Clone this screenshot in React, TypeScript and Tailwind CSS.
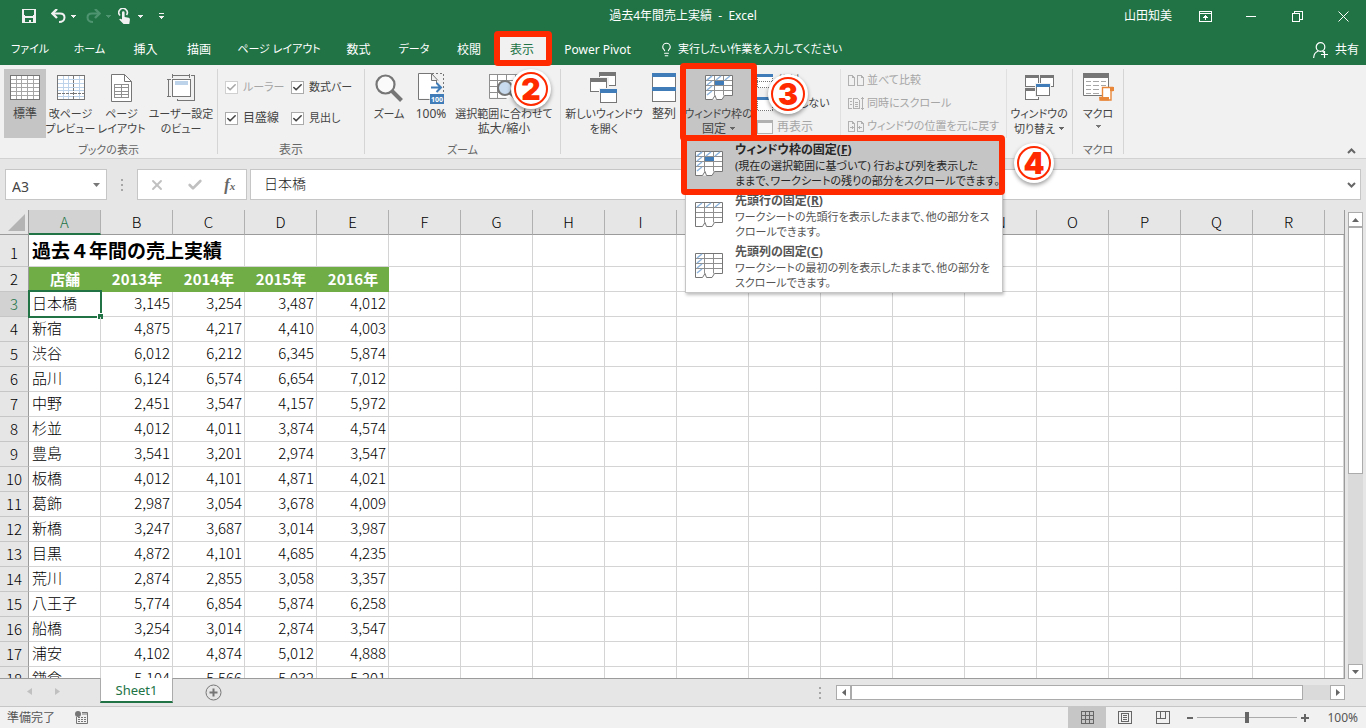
import React from "react";
import { Check, Lightbulb, X } from "lucide-react";

interface Tab {
  label: string;
  width: string;
}

const tabs: Tab[] = [
  { label: "ファイル", width: "w-[60px]" },
  { label: "ホーム", width: "w-[59px]" },
  { label: "挿入", width: "w-[53px]" },
  { label: "描画", width: "w-[54px]" },
  { label: "ページ レイアウト", width: "w-[106px]" },
  { label: "数式", width: "w-[53px]" },
  { label: "データ", width: "w-[58px]" },
  { label: "校閲", width: "w-[52px]" },
  { label: "表示", width: "w-[54px]" },
  { label: "Power Pivot", width: "w-[97px]" },
];

const columns = "ABCDEFGHIJKLMNOPQR".split("");

const years = ["2013年", "2014年", "2015年", "2016年"];

const sales: [string, string, string, string, string][] = [
  ["日本橋", "3,145", "3,254", "3,487", "4,012"],
  ["新宿", "4,875", "4,217", "4,410", "4,003"],
  ["渋谷", "6,012", "6,212", "6,345", "5,874"],
  ["品川", "6,124", "6,574", "6,654", "7,012"],
  ["中野", "2,451", "3,547", "4,157", "5,972"],
  ["杉並", "4,012", "4,011", "3,874", "4,574"],
  ["豊島", "3,541", "3,201", "2,974", "3,547"],
  ["板橋", "4,012", "4,101", "4,871", "4,021"],
  ["葛飾", "2,987", "3,054", "3,678", "4,009"],
  ["新橋", "3,247", "3,687", "3,014", "3,987"],
  ["目黒", "4,872", "4,101", "4,685", "4,235"],
  ["荒川", "2,874", "2,855", "3,058", "3,357"],
  ["八王子", "5,774", "6,854", "5,874", "6,258"],
  ["船橋", "3,254", "3,014", "2,874", "3,547"],
  ["浦安", "4,102", "4,874", "5,012", "4,888"],
  ["鎌倉", "5,104", "5,566", "5,032", "5,201"],
];

const freezeOptions: {
  kind: "both" | "row" | "col";
  title: string;
  hotkey: string;
  lines: [string, string];
}[] = [
  {
    kind: "both",
    title: "ウィンドウ枠の固定",
    hotkey: "F",
    lines: ["(現在の選択範囲に基づいて) 行および列を表示した", "ままで、ワークシートの残りの部分をスクロールできます。"],
  },
  {
    kind: "row",
    title: "先頭行の固定",
    hotkey: "R",
    lines: ["ワークシートの先頭行を表示したままで、他の部分をス", "クロールできます。"],
  },
  {
    kind: "col",
    title: "先頭列の固定",
    hotkey: "C",
    lines: ["ワークシートの最初の列を表示したままで、他の部分を", "スクロールできます。"],
  },
];

// Labels with kana are set one size smaller than pure kanji or latin ones
const textSize = (label: string) => (/[ぁ-ヶ]/.test(label) ? "text-[11px]" : "text-[12px]");

/* ---------- Icons ---------- */

const Caret = ({ className = "" }: { className?: string }) => (
  <svg width="5" height="3" viewBox="0 0 5 3" className={className} shapeRendering="crispEdges">
    <path d="M0 0h5v1H4v1H3v1H2V2H1V1H0z" fill="currentColor" />
  </svg>
);

const SaveIcon = () => (
  <svg width="14" height="14" viewBox="0 0 14 14" shapeRendering="crispEdges">
    <path d="M0 0h14v14H0z" fill="#f1f1f1" />
    <path d="M2 1h10v6H2zM3 9h8v4H9v-2H7v2H3z" fill="#217346" />
    <path d="M2 6h1v1H2zM11 6h1v1h-1z" fill="#f1f1f1" />
  </svg>
);

const UndoIcon = () => (
  <svg width="15" height="14" viewBox="0 0 15 14" fill="none">
    <path d="M2 4.500h7c3 0 4.500 1.600 4.500 4S11.500 13 8 13" stroke="currentColor" strokeWidth="2" />
    <path d="M6 0 1.500 4.500 6 9" stroke="currentColor" strokeWidth="2.400" />
  </svg>
);

const TouchIcon = () => (
  <svg width="13" height="17" viewBox="0 0 13 17">
    <path d="M2 7.500A4.200 4.200 0 1 1 8.500 7" stroke="#f1f1f1" strokeWidth="1.600" fill="none" />
    <path d="M4 4.500a1.300 1.300 0 0 1 2.600 0V9l4 .8c1 .3 1.400 1 1.300 2L11.300 16H5.500L1.200 11.500c.6-1 1.600-1 2.800 0z" fill="#f1f1f1" />
  </svg>
);

const NormalIcon = () => (
  <svg width="30" height="25" viewBox="0 0 30 25" shapeRendering="crispEdges">
    <rect x=".5" y=".5" width="29" height="24" fill="#fff" />
    <path d="M6.500 1v23M11.500 1v23M17.500 1v23M23.500 1v23M1 4.500h28M1 8.500h28M1 12.500h28M1 16.500h28M1 20.500h28" stroke="#a6a6a6" />
    <rect x=".5" y=".5" width="29" height="24" fill="none" stroke="#767676" />
  </svg>
);

const PageBreakIcon = () => (
  <svg width="28" height="25" viewBox="0 0 28 25" fill="none" shapeRendering="crispEdges">
    <rect x=".5" y=".5" width="27" height="24" fill="#fff" />
    <path d="M6.500 1v23M11.500 1v23M22.500 1v23M1 4.500h26M1 8.500h26M1 12.500h26M1 15.500h26M1 21.500h26" stroke="#bcd3ea" />
    <path d="M16.500 1v23M1 18.500h26" stroke="#767676" strokeDasharray="3 1" />
    <rect x=".5" y=".5" width="27" height="24" stroke="#767676" />
  </svg>
);

const PageLayoutIcon = () => (
  <svg width="21" height="28" viewBox="0 0 21 28" fill="none">
    <path d="M.5.5h13l7 7v20H.5z" fill="#fff" stroke="#767676" />
    <path d="M13.500.5v7h7" stroke="#767676" />
    <path d="M3.500 10.500h14v13h-14zM3.500 13.500h14M3.500 17.500h14M3.500 20.500h14M10.500 10v14" stroke="#8f8f8f" shapeRendering="crispEdges" />
  </svg>
);

const CustomViewIcon = () => (
  <svg width="28" height="28" viewBox="0 0 28 28" fill="none" shapeRendering="crispEdges">
    <path d="M5.500 0v4M22.500 0v4M5 1.500h18M0 5.500h4M1.500 5v18M0 22.500h4M24 1.500h3.500v25h-17v-2" stroke="#767676" />
    <rect x="5.500" y="5.500" width="18" height="17" fill="#fff" stroke="#767676" />
    <rect x="8" y="7" width="13" height="4" fill="#bcd3ea" />
  </svg>
);

const MagnifierIcon = () => (
  <svg width="28" height="29" viewBox="0 0 28 29" fill="none">
    <circle cx="10.500" cy="11.500" r="9" fill="#fafafa" stroke="#767676" strokeWidth="2.200" />
    <path d="m17 18 9.500 9.500" stroke="#767676" strokeWidth="4" />
  </svg>
);

const HundredIcon = () => (
  <svg width="28" height="32" viewBox="0 0 28 32" fill="none">
    <path d="M1.500 1.500h13v7h6v18h-19z" fill="#fff" />
    <path d="M20 8.500h-5.500v-7l6.500 7M14.500 1.500H1.500v26h11M19.500 9v3" stroke="#767676" />
    <path d="M15 1.500h11.500V20" stroke="#767676" strokeDasharray="2 2" />
    <path d="M14 15.500h9M19.500 11l4.500 4.500-4.500 4.500" stroke="#3f7cb8" strokeWidth="2" />
    <rect x="13" y="22" width="14" height="10" fill="#3f7cb8" />
    <text x="20" y="30" textAnchor="middle" fontSize="7" fontWeight="700" fill="#fff" fontFamily="Noto Sans">100</text>
  </svg>
);

const ZoomSelectionIcon = () => (
  <svg width="30" height="32" viewBox="0 0 30 32" fill="none">
    <path d="M1 2.500h28v23H1z" fill="#fff" />
    <path d="M.5 2.500h29M.5 8.500h29M.5 14.500h10M.5 20.500h10M.5 26.500h17M.5 2v24.500M8.500 2v24.500M17.500 2v6M26.500 2v6" stroke="#8f8f8f" />
    <circle cx="16" cy="16" r="7" fill="#c9dbee" stroke="#767676" strokeWidth="2" />
    <path d="m21 21 6 6" stroke="#767676" strokeWidth="3" />
  </svg>
);

const NewWindowIcon = () => (
  <svg width="28" height="32" viewBox="0 0 28 32" fill="none" shapeRendering="crispEdges">
    <path d="M9.500.5h16v13h-16z" fill="#fff" stroke="#767676" />
    <path d="M9 0h17v4H9z" fill="#767676" />
    <path d="M0 5h19v16H0z" fill="#f1f1f1" />
    <path d="M.5 6.500h16v13H.5z" fill="#fff" stroke="#767676" />
    <path d="M0 6h17v4H0z" fill="#767676" />
    <path d="M9 16h19v16H9z" fill="#f1f1f1" />
    <path d="M10.500 17.500h16v13h-16z" fill="#fff" stroke="#767676" />
    <path d="M10 17h17v4H10z" fill="#3f7cb8" />
  </svg>
);

const ArrangeIcon = () => (
  <svg width="24" height="29" viewBox="0 0 24 29" shapeRendering="crispEdges">
    <path d="M.5.5h23v28H.5z" fill="#fff" stroke="#767676" />
    <path d="M0 0h24v4H0zM0 14h24v4H0z" fill="#3f7cb8" />
  </svg>
);

const FreezeIcon = ({ kind }: { kind: "both" | "row" | "col" }) => (
  <svg width="28" height="26" viewBox="0 0 28 26" fill="none">
    <path d="M.5.5h27v20h-8l-2.500 4H.5z" fill="#fff" />
    <path d="M.5 5.500h27M.5 10.500h27M.5 15.500h27M9.500.5v20M18.500.5v20" stroke="#8f8f8f" />
    <path d="M.5 24.500V.5h27v20h-8l-2.500 4h-5.500l-1.500-4-2.500 4z" stroke="#767676" />
    {kind !== "col" && <path d="m2 5 5-4M11 5l5-4M20 5l5-4" stroke="#8db4dc" strokeWidth="1.500" />}
    {kind !== "row" && <path d="m2 5 5-4M2 10l5-4M2 15l5-4M2 20l5-4" stroke="#8db4dc" strokeWidth="1.500" />}
    {kind === "both" && <path d="M10 6h9v4h-9z" fill="#3f7cb8" />}
  </svg>
);

const SwitchIcon = () => (
  <svg width="29" height="26" viewBox="0 0 29 26" fill="none" shapeRendering="crispEdges">
    <path d="M.5.5h13v11H.5zM15.500.5h13v11h-13zM.5 13.500h13v11H.5z" fill="#fff" stroke="#767676" />
    <path d="M0 0h14v3H0zM15 0h14v3H15zM0 13h14v3H0z" fill="#767676" />
    <path d="M10 8h16v14H10z" fill="#f1f1f1" />
    <path d="M11.500 9.500h13v11h-13z" fill="#fff" stroke="#767676" />
    <path d="M11 9h14v3H11z" fill="#3f7cb8" />
  </svg>
);

const MacroIcon = () => (
  <svg width="31" height="29" viewBox="0 0 31 29" fill="none">
    <path d="M.5.5h25v22H.5z" fill="#fff" stroke="#767676" />
    <path d="M0 0h26v5H0z" fill="#767676" />
    <path d="M3 8.500h5m2 0h6m2 0h5M3 12.500h5m2 0h6m2 0h5M3 16.500h5m2 0h6M3 20.500h5m2 0h6" stroke="#a6a6a6" />
    <path d="M19.500 14.500h10v3H28V27H17v-2.500h2.500z" fill="#fff" stroke="#e8873a" strokeWidth="1.400" />
    <path d="M16 24h10v3.500H17.500zM27 14h4v4h-4z" fill="#e8873a" />
  </svg>
);

const SmallWindowIcon = ({ kind }: { kind: "split" | "hide" | "show" }) => (
  <svg width="16" height="14" viewBox="0 0 16 14" fill="none" shapeRendering="crispEdges" className="shrink-0">
    {kind === "show" ? (
      <>
        <path d="M.5.500h15v13H.5z" fill="#f8f8f8" stroke="#b1b1b1" />
        <path d="M0 0h16v3H0z" fill="#b1b1b1" />
      </>
    ) : (
      <>
        <path d="M.5.500h15v13H.5z" fill="#fff" stroke="#767676" strokeDasharray="1 1" />
        <path d="M0 0h16v3H0z" fill="#3f7cb8" />
        {kind === "split" && <path d="M0 7.500h16" stroke="#767676" strokeDasharray="1 1" />}
      </>
    )}
  </svg>
);

const PagesIcon = ({ kind }: { kind: "compare" | "sync" | "reset" }) => (
  <svg width="17" height="13" viewBox="0 0 17 13" fill="none" stroke="#b1b1b1" shapeRendering="crispEdges" className="shrink-0">
    {kind === "sync" ? (
      <path d="M4 1.500H.500v10H4M5.500 1.500h4l2 2v8h-6zM7 5.500h3M7 7.500h3M7 9.500h3M2 4.500h2M2 7.500h2M14.500 0v13M13 1.500h3M13 11.500h3" />
    ) : (
      <>
        <path d="M.5 1.500h4l2 2v8h-6zM4.500 1.500v2h2M9.500 1.500h4l2 2v8h-6zM13.500 1.500v2h2" />
        {kind === "reset" && <path d="M2 7.500h4M4.500 6v3M10 7.500h4M11.500 6v3" />}
      </>
    )}
  </svg>
);

/* ---------- Ribbon pieces ---------- */

interface RibbonButtonProps {
  icon: React.ReactNode;
  lines: string[];
  width: string;
  active?: boolean;
  caret?: boolean;
}

const RibbonButton: React.FC<RibbonButtonProps> = ({ icon, lines, width, active, caret }) => (
  <button
    className={`${width} ${active ? "bg-[#c5c5c5]" : ""} flex h-[69px] shrink-0 flex-col items-center leading-[15px] whitespace-nowrap text-[#444]`}
  >
    <span className="flex h-[37px] items-center justify-center">{icon}</span>
    {lines.map((line, i) => (
      <span key={line} className={`${textSize(line)} flex items-center gap-1`}>
        {line}
        {caret && i === lines.length - 1 && lines.length > 1 && <Caret className="text-[#666]" />}
      </span>
    ))}
    {caret && lines.length === 1 && <Caret className="mt-1 text-[#777]" />}
  </button>
);

const RibbonGroup: React.FC<{ label?: string; width: string; children: React.ReactNode }> = ({ label = "", width, children }) => (
  <section className={`${width} my-1 flex shrink-0 flex-col border-r border-[#d5d5d5]`}>
    <div className="flex h-[69px] shrink-0">{children}</div>
    <div className={`${textSize(label)} pt-1 text-center leading-[16px] text-[#666]`}>{label}</div>
  </section>
);

const CheckField: React.FC<{ label: string; disabled?: boolean }> = ({ label, disabled }) => (
  <label className={`${textSize(label)} flex items-center gap-[5px] whitespace-nowrap ${disabled ? "text-[#a6a6a6]" : "text-[#444]"}`}>
    <span className="grid">
      <input
        type="checkbox"
        defaultChecked
        disabled={disabled}
        className={`size-[13px] appearance-none border bg-white [grid-area:1/1] ${disabled ? "border-[#d0d0d0]" : "border-[#ababab]"}`}
      />
      <Check className="pointer-events-none m-px size-[11px] [grid-area:1/1]" strokeWidth={3.5} />
    </span>
    {label}
  </label>
);

const Badge: React.FC<{ value: number; className: string }> = ({ value, className }) => (
  <span className={`absolute z-40 flex size-10 rounded-full bg-white p-[3px] shadow-[0_2px_4px_rgba(0,0,0,0.4)] ${className}`}>
    <span className="flex flex-1 items-center justify-center rounded-full border-2 border-[#ff2a00] font-['Inter',sans-serif] text-[30px] leading-none font-black text-[#ff2a00]">
      {value}
    </span>
  </span>
);

const FreezeMenu = () => (
  <div role="menu" className="absolute top-[69px] left-0 z-20 w-[318px] border border-[#c6c6c6] bg-white shadow-[1px_2px_3px_rgba(0,0,0,0.25)]">
    {freezeOptions.map((option) => (
      <button
        key={option.kind}
        role="menuitem"
        className={`flex h-[51px] w-full items-start pl-[9px] text-left text-[11px] leading-[15px] whitespace-nowrap ${
          option.kind === "both" ? "bg-[#c5c5c5] text-[#262626]" : "text-[#555]"
        }`}
      >
        <span className="w-10 shrink-0 pt-3">
          <FreezeIcon kind={option.kind} />
        </span>
        <span>
          <span className="block pt-0.5 text-[12px] leading-[17px] font-bold">
            {option.title}(<u>{option.hotkey}</u>)
          </span>
          <span className="block">{option.lines[0]}</span>
          <span className="block">{option.lines[1]}</span>
        </span>
      </button>
    ))}
    <span className="pointer-events-none absolute -top-1 -left-[5px] h-[60px] w-[324px] rounded-sm border-6 border-[#ff2a00]" />
    <Badge value={4} className="top-1 left-[328px]" />
  </div>
);

/* ---------- Page sections ---------- */

const TitleBar = () => (
  <header className="grid h-8 grid-cols-[1fr_auto_1fr] items-center text-xs">
    <div className="flex items-center pl-[22px] text-[#f1f1f1]">
      <button aria-label="上書き保存"><SaveIcon /></button>
      <button aria-label="元に戻す" className="ml-[15px] flex items-center gap-[5px]"><UndoIcon /><Caret /></button>
      <button aria-label="やり直し" disabled className="ml-[10px] flex items-center gap-[5px] text-[#4f9470]">
        <span className="-scale-x-100"><UndoIcon /></span>
        <Caret />
      </button>
      <button aria-label="タッチ/マウス モードの切り替え" className="ml-[7px] flex items-center gap-[7px]"><TouchIcon /><Caret /></button>
      <button aria-label="クイック アクセス ツール バーのユーザー設定" className="ml-4 flex flex-col items-center gap-px">
        <span className="h-px w-[5px] bg-[#f1f1f1]" />
        <Caret className="mt-px" />
      </button>
    </div>
    <h1>過去4年間売上実績&nbsp; -&nbsp; Excel</h1>
    <div className="flex items-center justify-end">
      <span className="mr-[10px]">山田知美</span>
      <button aria-label="リボンの表示オプション" className="flex w-[46px] justify-center">
        <svg width="13" height="11" viewBox="0 0 13 11" fill="none" stroke="#fff" shapeRendering="crispEdges">
          <path d="M.5.5h12v10H.5zM.5 2.500h12M6.500 4v5M4 6.500h5M5 5.500h3" />
        </svg>
      </button>
      <button aria-label="最小化" className="flex w-[46px] justify-center"><span className="h-px w-[10px] bg-white" /></button>
      <button aria-label="元のサイズに戻す" className="flex w-[46px] justify-center">
        <svg width="11" height="11" viewBox="0 0 11 11" fill="none" stroke="#fff" shapeRendering="crispEdges">
          <path d="M.5 2.500h7v8h-7zM2.500 2V.5h8v8H8" />
        </svg>
      </button>
      <button aria-label="閉じる" className="flex w-[46px] justify-center">
        <svg width="11" height="11" viewBox="0 0 11 11" stroke="#fff"><path d="m.5.5 10 10M10.500.5l-10 10" /></svg>
      </button>
    </div>
  </header>
);

const TabBar = () => (
  <nav className="flex h-[33px] items-stretch text-[12px] whitespace-nowrap">
    {tabs.map((tab) =>
      tab.label === "表示" ? (
        <div key={tab.label} className={`${tab.width} relative flex shrink-0`}>
          <button className="flex-1 bg-[#f1f1f1] pt-0.5 text-[#217346]">{tab.label}</button>
          <span className="pointer-events-none absolute -top-px -left-px z-30 h-[35px] w-[58px] rounded-sm border-6 border-[#ff2a00]" />
          <Badge value={2} className="top-[37px] left-4" />
        </div>
      ) : (
        <button key={tab.label} className={`${tab.width} ${textSize(tab.label)} shrink-0 pt-0.5`}>{tab.label}</button>
      )
    )}
    <button className="ml-[13px] flex items-center gap-1 pt-0.5 text-[11px]">
      <Lightbulb className="size-[15px]" strokeWidth={1.8} />
      実行したい作業を入力してください
    </button>
    <button className="mr-[7px] ml-auto flex items-center gap-[7px] pt-0.5">
      <svg width="15" height="16" viewBox="0 0 15 16" fill="none" stroke="#fff" strokeWidth="1.200">
        <circle cx="7.500" cy="5" r="4.300" />
        <path d="M.6 16c.2-4 2-6 4.600-7M9.500 9l1.500 1.500M8 12.500h7M11.500 9v7" />
      </svg>
      共有
    </button>
  </nav>
);

const Ribbon = () => (
  <div className="flex h-[94px] border-b border-[#d2d2d2] bg-[#f1f1f1]">
    <RibbonGroup label="ブックの表示" width="w-[218px]">
      <div className="flex pl-1">
        <RibbonButton icon={<NormalIcon />} lines={["標準"]} width="w-[42px]" active />
        <RibbonButton icon={<PageBreakIcon />} lines={["改ページ", "プレビュー"]} width="w-[49px]" />
        <RibbonButton icon={<PageLayoutIcon />} lines={["ページ", "レイアウト"]} width="w-[53px]" />
        <RibbonButton icon={<CustomViewIcon />} lines={["ユーザー設定", "のビュー"]} width="w-[66px]" />
      </div>
    </RibbonGroup>
    <RibbonGroup label="表示" width="w-[147px]">
      <div className="grid h-[65px] grid-cols-[66px_auto] pt-[3px] pl-[7px]">
        <CheckField label="ルーラー" disabled />
        <CheckField label="数式バー" />
        <CheckField label="目盛線" />
        <CheckField label="見出し" />
      </div>
    </RibbonGroup>
    <RibbonGroup label="ズーム" width="w-[196px]">
      <div className="flex pl-[3px]">
        <RibbonButton icon={<MagnifierIcon />} lines={["ズーム"]} width="w-[42px]" />
        <RibbonButton icon={<HundredIcon />} lines={["100%"]} width="w-[42px]" />
        <RibbonButton icon={<ZoomSelectionIcon />} lines={["選択範囲に合わせて", "拡大/縮小"]} width="w-[104px]" />
      </div>
    </RibbonGroup>
    <RibbonGroup width="w-[512px]">
      <div className="flex pl-[3px]">
        <RibbonButton icon={<NewWindowIcon />} lines={["新しいウィンドウ", "を開く"]} width="w-[80px]" />
        <RibbonButton icon={<ArrangeIcon />} lines={["整列"]} width="w-[40px]" />
        <div className="relative ml-px">
          <RibbonButton icon={<FreezeIcon kind="both" />} lines={["ウィンドウ枠の", "固定"]} width="w-[67px]" active caret />
          <FreezeMenu />
          <span className="pointer-events-none absolute -top-[6px] -left-[5px] z-30 h-[78px] w-[77px] rounded-sm border-6 border-[#ff2a00]" />
          <Badge value={3} className="top-[5px] left-[83px]" />
        </div>
        <div className="flex w-[89px] flex-col border-r border-[#e0e0e0] pl-[5px] text-[11px] whitespace-nowrap text-[#444]">
          <button className="flex h-[23px] items-center gap-1"><SmallWindowIcon kind="split" />分割</button>
          <button className="flex h-[23px] items-center gap-1"><SmallWindowIcon kind="hide" />表示しない</button>
          <button disabled className="flex h-[23px] items-center gap-1 text-[12px] text-[#a6a6a6]"><SmallWindowIcon kind="show" />再表示</button>
        </div>
        <div className="flex w-[166px] flex-col border-r border-[#e0e0e0] pl-[7px] text-[11px] whitespace-nowrap text-[#a6a6a6]">
          <button disabled className="flex h-[23px] items-center gap-[2px]"><PagesIcon kind="compare" />並べて比較</button>
          <button disabled className="flex h-[23px] items-center gap-[2px]"><PagesIcon kind="sync" />同時にスクロール</button>
          <button disabled className="flex h-[23px] items-center gap-[2px]"><PagesIcon kind="reset" />ウィンドウの位置を元に戻す</button>
        </div>
        <RibbonButton icon={<SwitchIcon />} lines={["ウィンドウの", "切り替え"]} width="w-[64px]" caret />
      </div>
    </RibbonGroup>
    <RibbonGroup label="マクロ" width="w-[51px]">
      <RibbonButton icon={<MacroIcon />} lines={["マクロ"]} width="w-[50px]" caret />
    </RibbonGroup>
    <button aria-label="リボンを折りたたむ" className="mr-[10px] mb-1 ml-auto self-end text-[#666]">
      <svg width="9" height="6" viewBox="0 0 9 6" fill="none"><path d="m1 5 3.500-3.500L8 5" stroke="currentColor" strokeWidth="2" /></svg>
    </button>
  </div>
);

const FormulaBar = () => (
  <div className="flex h-[51px] items-start bg-[#e6e6e6] pt-[10px] pr-[5px] pl-[5px]">
    <div className="flex h-[31px] w-[102px] items-center border border-[#c6c6c6] bg-white pr-[6px] pl-[6px]">
      <input aria-label="名前ボックス" defaultValue="A3" className="w-full min-w-0 bg-transparent pt-1 text-sm leading-none text-[#444] outline-none" />
      <svg width="7" height="4" viewBox="0 0 7 4" className="shrink-0"><path d="M0 0h7L3.500 4z" fill="#777" /></svg>
    </div>
    <div className="flex h-[31px] w-[30px] flex-col items-center justify-center gap-[3px]">
      <span className="size-[2px] bg-[#a6a6a6]" />
      <span className="size-[2px] bg-[#a6a6a6]" />
      <span className="size-[2px] bg-[#a6a6a6]" />
    </div>
    <div className="flex h-[31px] w-[110px] items-center justify-around border border-[#c6c6c6] bg-white text-[#c0c0c0]">
      <button aria-label="キャンセル"><X className="size-4" strokeWidth={2.8} /></button>
      <button aria-label="入力"><Check className="size-4" strokeWidth={4} /></button>
      <button aria-label="関数の挿入" className="font-['Liberation_Serif',serif] text-base leading-none font-bold text-[#666] italic">
        f<span className="text-[11px]">x</span>
      </button>
    </div>
    <div className="ml-[3px] flex h-[31px] flex-1 items-center border border-[#c6c6c6] bg-white pr-[4px] pl-[13px]">
      <input
        aria-label="数式バー"
        defaultValue="日本橋"
        className="flex-1 bg-transparent pb-1 font-['Noto_Sans_CJK_JP',sans-serif] text-sm font-light text-[#222] outline-none"
      />
      <svg width="9" height="6" viewBox="0 0 9 6" fill="none"><path d="m1 1 3.500 3.500L8 1" stroke="#666" strokeWidth="2" /></svg>
    </div>
  </div>
);

const cell = "border-r border-b border-[#d4d4d4] p-0 pb-0.5";
const greenCell = "bg-[#70ad47] p-0 pb-0.5 text-center font-bold text-white";
const rowHead = "border-r border-b border-r-[#9b9b9b] border-b-[#c6c6c6] p-0 text-center font-light";

const EmptyCells = ({ count }: { count: number }) => (
  <>
    {Array.from({ length: count }, (_, i) => (
      <td key={i} className={cell} />
    ))}
  </>
);

const Sheet = () => (
  <div className="flex min-h-0 flex-1 bg-[#e6e6e6]">
    <div className="min-w-0 flex-1 overflow-hidden border-r border-b border-[#9b9b9b]">
      <table className="w-full table-fixed border-separate border-spacing-0 bg-white font-['Noto_Sans_CJK_JP',sans-serif] text-[15px] leading-[22px] font-light text-black [font-feature-settings:normal]">
        <colgroup>
          <col className="w-[29px]" />
          {columns.map((c) => (
            <col key={c} className="w-[72px]" />
          ))}
          <col />
        </colgroup>
        <thead>
          <tr className="h-[25px] bg-[#e6e6e6]">
            <th className="border-r border-b border-r-[#9b9b9b] border-b-[#9b9b9b] p-0">
              <svg width="17" height="17" viewBox="0 0 17 17" className="ml-2"><path d="M17 0v17H0z" fill="#b4b4b4" /></svg>
            </th>
            {columns.map((c) => (
              <th
                key={c}
                className={`border-r p-0 font-light ${
                  c === "A"
                    ? "border-b-2 border-r-[#b0b0b0] border-b-[#217346] bg-[#d2d2d2] text-[#217346]"
                    : "border-b border-r-[#b0b0b0] border-b-[#9b9b9b]"
                }`}
              >
                {c}
              </th>
            ))}
            <th className="border-b border-[#9b9b9b] p-0" />
          </tr>
        </thead>
        <tbody>
          <tr className="h-8">
            <th className={`${rowHead} bg-[#e6e6e6] pt-1`}>1</th>
            <td colSpan={3} className={`${cell} pl-[3px] text-[19px] font-bold`}>過去４年間の売上実績</td>
            <EmptyCells count={16} />
          </tr>
          <tr className="h-[25px]">
            <th className={`${rowHead} bg-[#e6e6e6]`}>2</th>
            <td className={greenCell}>店舗</td>
            {years.map((year) => (
              <td key={year} className={greenCell}>{year}</td>
            ))}
            <EmptyCells count={14} />
          </tr>
          {sales.map(([shop, ...values], i) => (
            <tr key={shop} className="h-[25px]">
              <th className={`${rowHead} ${i === 0 ? "bg-[#d2d2d2] text-[#217346]" : "bg-[#e6e6e6]"}`}>{i + 3}</th>
              <td className={`${cell} relative pl-[3px]`}>
                {shop}
                {i === 0 && (
                  <span className="absolute -top-[2px] -right-[2px] -bottom-[2px] -left-px border-2 border-[#217346]">
                    <span className="absolute -right-[3px] -bottom-[3px] size-[6px] border-t border-l border-white bg-[#217346]" />
                  </span>
                )}
              </td>
              {values.map((value, j) => (
                <td key={j} className={`${cell} pr-[2px] text-right`}>{value}</td>
              ))}
              <EmptyCells count={14} />
            </tr>
          ))}
        </tbody>
      </table>
    </div>
    {/* Vertical scroll bar */}
    <div className="flex w-[21px] flex-col pt-[2px] pr-[3px] pl-[3px]">
      <button aria-label="上へ" className="flex h-[15px] items-center justify-center border border-[#ababab] bg-white">
        <svg width="7" height="4" viewBox="0 0 7 4"><path d="M0 4h7L3.500 0z" fill="#666" /></svg>
      </button>
      <div className="flex flex-1 flex-col bg-[#dadada]">
        <div className="h-[247px] border border-[#ababab] bg-white" />
      </div>
      <button aria-label="下へ" className="flex h-[15px] items-center justify-center border border-[#ababab] bg-white">
        <svg width="7" height="4" viewBox="0 0 7 4"><path d="M0 0h7L3.500 4z" fill="#666" /></svg>
      </button>
    </div>
  </div>
);

const SheetBar = () => (
  <div className="flex h-[27px] items-start bg-[#e6e6e6]">
    <div className="flex h-6 w-[100px] items-center gap-[23px] pl-[27px]">
      <svg width="5" height="7" viewBox="0 0 5 7"><path d="M5 0v7L0 3.500z" fill="#c0c0c0" /></svg>
      <svg width="5" height="7" viewBox="0 0 5 7"><path d="M0 0v7l5-3.500z" fill="#c0c0c0" /></svg>
    </div>
    <button className="-mt-px h-[25px] w-[73px] border-x border-b-2 border-x-[#ababab] border-b-[#217346] bg-white pt-0.5 text-[13px] text-[#217346]">
      Sheet1
    </button>
    <button aria-label="新しいシート" className="mt-[5px] ml-8">
      <svg width="17" height="17" viewBox="0 0 17 17" fill="none" stroke="#767676">
        <circle cx="8.500" cy="8.500" r="7.500" />
        <path d="M4.500 8.500h8M8.500 4.500v8" strokeWidth="2" />
      </svg>
    </button>
    <div className="mt-2 mr-[15px] ml-auto flex flex-col gap-[3px]">
      <span className="size-[2px] bg-[#a6a6a6]" />
      <span className="size-[2px] bg-[#a6a6a6]" />
      <span className="size-[2px] bg-[#a6a6a6]" />
    </div>
    {/* Horizontal scroll bar */}
    <div className="mt-[6px] mr-[21px] flex h-[15px] w-[509px] bg-[#dadada]">
      <button aria-label="左へ" className="flex w-[15px] items-center justify-center border border-[#ababab] bg-white">
        <svg width="4" height="7" viewBox="0 0 4 7"><path d="M4 0v7L0 3.500z" fill="#666" /></svg>
      </button>
      <div className="w-[452px] border border-[#ababab] bg-white" />
      <button aria-label="右へ" className="ml-auto flex w-[15px] items-center justify-center border border-[#ababab] bg-white">
        <svg width="4" height="7" viewBox="0 0 4 7"><path d="M0 0v7l4-3.500z" fill="#666" /></svg>
      </button>
    </div>
  </div>
);

const StatusBar = () => (
  <footer className="flex h-[22px] items-center border-t border-[#c6c6c6] bg-[#f1f1f1] text-xs text-[#555]">
    <span className="pl-[7px]">準備完了</span>
    <svg width="13" height="13" viewBox="0 0 13 13" fill="none" className="ml-5">
      <path d="M1.500 6v6.500h11v-11H7" stroke="#767676" />
      <circle cx="3" cy="3" r="3" fill="#767676" />
      <path d="M7 3h6M3 6.500h2m1 0h2m1 0h2M3 8.500h2m1 0h2m1 0h2M3 10.500h2m1 0h2m1 0h2" stroke="#767676" />
    </svg>
    <div className="ml-auto flex h-full">
      <button aria-label="標準" className="flex w-[38px] items-center justify-center bg-[#c6c6c6]">
        <svg width="13" height="13" viewBox="0 0 13 13" fill="none" stroke="#666" shapeRendering="crispEdges">
          <path d="M.5.5h12v12H.5zM4.500 0v13M8.500 0v13M0 4.500h13M0 8.500h13" />
        </svg>
      </button>
      <button aria-label="ページ レイアウト" className="flex w-[38px] items-center justify-center">
        <svg width="14" height="13" viewBox="0 0 14 13" fill="none" stroke="#666" shapeRendering="crispEdges">
          <path d="M.5.5h13v12H.5zM3.500 2.500h7v8h-7zM5 4.500h4M5 6.500h4M5 8.500h4" />
        </svg>
      </button>
      <button aria-label="改ページ プレビュー" className="flex w-[38px] items-center justify-center">
        <svg width="14" height="13" viewBox="0 0 14 13" fill="none" stroke="#666" shapeRendering="crispEdges">
          <path d="M.5.5h13v12H.5zM4.500 0v7M9.500 0v7.500M0 7.500h10" />
        </svg>
      </button>
    </div>
    <button aria-label="縮小" className="ml-[5px] h-[2px] w-[6px] bg-[#666]" />
    <input
      type="range"
      aria-label="ズーム"
      className="mx-[4px] h-[11px] w-[100px] appearance-none bg-[linear-gradient(#ababab,#ababab)] bg-[length:100%_1px] bg-center bg-no-repeat [&::-webkit-slider-thumb]:h-[11px] [&::-webkit-slider-thumb]:w-1 [&::-webkit-slider-thumb]:appearance-none [&::-webkit-slider-thumb]:bg-[#666]"
    />
    <button aria-label="拡大">
      <svg width="8" height="8" viewBox="0 0 8 8" shapeRendering="crispEdges"><path d="M0 3h3V0h2v3h3v2H5v3H3V5H0z" fill="#666" /></svg>
    </button>
    <button className="mr-2 ml-[18px]">100%</button>
  </footer>
);

const App: React.FC = () => {
  return (
    <div className="flex h-screen min-h-96 flex-col overflow-hidden bg-[#217346] font-['Noto_Sans','Noto_Sans_CJK_JP',sans-serif] text-white [font-feature-settings:'palt']">
      <TitleBar />
      <TabBar />
      <Ribbon />
      <FormulaBar />
      <Sheet />
      <SheetBar />
      <StatusBar />
    </div>
  );
};

export default App;
